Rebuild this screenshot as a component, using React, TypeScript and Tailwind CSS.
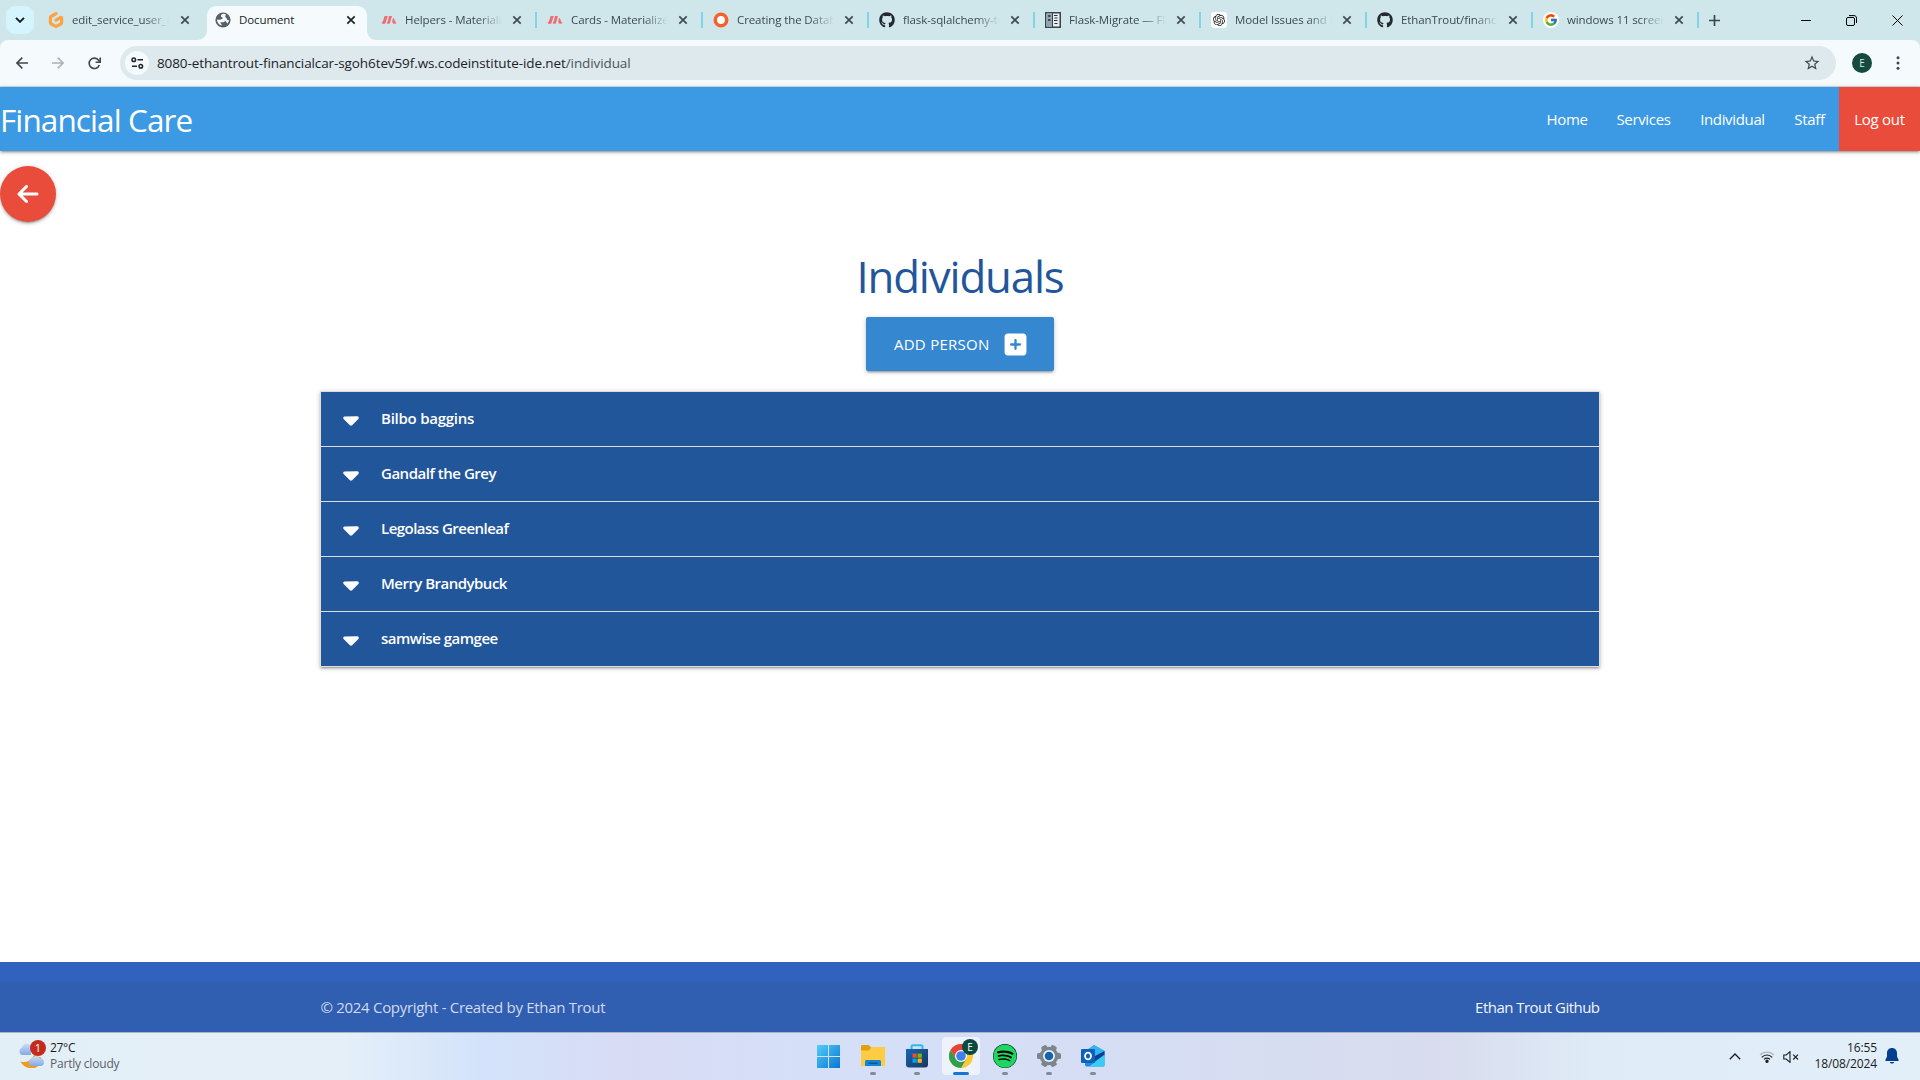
import React from "react";
import { FaArrowLeft, FaCaretDown, FaGithub, FaSpotify, FaSquarePlus } from "react-icons/fa6";
import { FcGoogle } from "react-icons/fc";
import { SiGitpod, SiOpenai } from "react-icons/si";
import { MdStarBorder } from "react-icons/md";

function Globe() {
  return (
    <svg viewBox="0 0 16 16" className="size-4">
      <circle cx="8" cy="8" r="7.6" fill="#5a5f64" />
      <path d="M8.2 1.8C6.2 2 5.2 3.6 6.2 4.8c.6.7 1.6.5 1.5 1.5-.1.8-1.4.6-2.2 1.3-.5.4-1.8.3-3.6-.1.1 3 1.9 5.3 4.6 6V12c-.9-.3-1.2-1-.9-1.7h2.6c1.200 0 1.300-1.100 2.400-1.200l1.700 2.300c1-.9 1.700-2.100 1.800-3.400-1.200.6-2.300-.2-2.300-1.200 0-1.300-1.500-.9-1.600-2.200 0-.9.700-1.300.700-2-.8-.5-1.600-.8-2.700-.8z" fill="#f5fafc" />
    </svg>
  );
}

function Materialize() {
  return (
    <svg viewBox="0 0 16 16" className="size-4" fill="#ee6e73">
      <path d="M3.600 4h3.200L4.300 11.500C3.400 12.400 1.600 12 .4 10.800 2 10.500 2.600 7 3.600 4z" />
      <path d="M8 4h3l-2 7c-.9 1.300-2.600 1-3.300 0C7 9.500 7.400 6.500 8 4z" />
      <path d="M12 6c1.500-.5 1.600 4 3.600 4.800-.8 1.200-3.600 1.500-4.200-.4-.2-1.400.2-3 .6-4.400z" />
    </svg>
  );
}

function Book() {
  return (
    <svg viewBox="0 0 16 16" className="size-4">
      <rect x=".75" y=".75" width="14.500" height="14.500" fill="#e9eef1" stroke="#3b444b" strokeWidth="1.500" />
      <path d="M1.500 1.500H7v13H1.500z" fill="#91a5b0" />
      <path d="M7.500 0v16" stroke="#3b444b" />
      <path d="M3 4h2.500M3 8h2.500" stroke="#27313a" strokeWidth="1.500" />
      <path d="M9 3.500h3.500M9.500 6h3M9 8.500h3.500M9.500 11.500h3" stroke="#27313a" strokeWidth="1.200" />
    </svg>
  );
}

function Close({ dark }: { dark?: boolean }) {
  return (
    <svg viewBox="0 0 10 10" className="size-[10px]" stroke={dark ? "#1d2426" : "#3e4b50"} strokeWidth="1.700">
      <path d="M1.300 1.300l7.400 7.400M8.700 1.300L1.300 8.700" />
    </svg>
  );
}

const tabs: { title: string; icon: React.ReactNode; sep?: boolean }[] = [
  { title: "edit_service_user_b", icon: <SiGitpod className="size-4 text-[#ffa13d]" /> },
  { title: "Document", icon: <Globe /> },
  { title: "Helpers - Materialize", icon: <Materialize /> },
  { title: "Cards - Materialize", icon: <Materialize />, sep: true },
  {
    title: "Creating the Databa",
    icon: (
      <svg viewBox="0 0 16 16" className="size-4">
        <circle cx="8" cy="8" r="5.700" fill="#fff" stroke="#f9602a" strokeWidth="3.500" />
      </svg>
    ),
    sep: true,
  },
  { title: "flask-sqlalchemy-tu", icon: <FaGithub className="size-4 text-[#24292f]" />, sep: true },
  { title: "Flask-Migrate — Fla", icon: <Book />, sep: true },
  {
    title: "Model Issues and F",
    icon: (
      <span className="flex size-4 items-center justify-center rounded-[3px] bg-white">
        <SiOpenai className="size-3 text-[#222]" />
      </span>
    ),
    sep: true,
  },
  { title: "EthanTrout/financia", icon: <FaGithub className="size-4 text-[#24292f]" />, sep: true },
  {
    title: "windows 11 screens",
    icon: (
      <span className="flex size-4 items-center justify-center rounded-full bg-white">
        <FcGoogle className="size-[14px]" />
      </span>
    ),
    sep: true,
  },
];

function TabStrip() {
  return (
    <div className="flex h-10 bg-[#cfe6eb]">
      <div className="mt-1.5 ml-1.5 flex h-7 w-7 shrink-0 items-center justify-center rounded-[9px] bg-[#d4f5fe]">
        <svg viewBox="0 0 10 6" className="h-[6px] w-[10px]" fill="none" stroke="#15191b" strokeWidth="1.900">
          <path d="M1 .8l4 4 4-4" />
        </svg>
      </div>
      <div className="ml-1 flex">
        {tabs.map((t, i) => {
          const active = i === 1;
          return (
            <div key={t.title} className="relative flex h-10 w-[166px] items-center">
              {active && (
                <svg viewBox="0 0 180 34" className="absolute top-1.5 left-[-7px] h-[34px] w-[180px]" fill="#f5fafd">
                  <path d="M0 34c6 0 10-4 10-10V10C10 4 14 0 20 0h140c6 0 10 4 10 10v14c0 6 4 10 10 10z" />
                </svg>
              )}
              {t.sep && <span className="absolute top-3 left-[-1px] h-4 w-0.5 bg-[#84d2e6]" />}
              <span className={`relative flex size-4 items-center justify-center ${i === 0 ? "ml-2.5" : "ml-[11px]"}`}>{t.icon}</span>
              <span
                className={`relative ml-2 w-[97px] overflow-hidden text-[11.5px] leading-4 tracking-[-0.1px] whitespace-nowrap ${active ? "text-[#1c2326]" : "mask-r-from-75% text-[#3a4a50]"}`}
              >
                {t.title}
              </span>
              <span className={`relative ${i === 0 ? "ml-[11px]" : "ml-[10px]"}`}>
                <Close dark={active} />
              </span>
            </div>
          );
        })}
      </div>
      <div className="relative flex items-center pl-[11px]">
        <span className="absolute top-3 left-[-1px] h-4 w-0.5 bg-[#84d2e6]" />
        <svg viewBox="0 0 11 11" className="size-[11px]" stroke="#37474c" strokeWidth="1.700">
          <path d="M5.500 0v11M0 5.500h11" />
        </svg>
      </div>
      <div className="mr-[17px] ml-auto flex items-center gap-[35px]">
        <svg viewBox="0 0 10 10" className="size-[10px]" stroke="#000" strokeWidth="1">
          <path d="M0 5.500h10" />
        </svg>
        <svg viewBox="0 0 11 11" className="size-[11px]" fill="none" stroke="#000">
          <rect x=".5" y="2.500" width="8" height="8" rx="1.500" />
          <path d="M3 .6h5c1.500 0 2.500 1 2.500 2.500V8" />
        </svg>
        <svg viewBox="0 0 11 11" className="size-[11px]" stroke="#000" strokeWidth="1">
          <path d="M.5.5l10 10M10.500.5L.5 10.500" />
        </svg>
      </div>
    </div>
  );
}

function AddressBar() {
  return (
    <div className="bg-[#cfe6eb]">
      <div className="flex h-[47px] items-center rounded-t-[8px] border-b border-[#d3dadd] bg-[#f5fafd] pl-4">
        <svg viewBox="0 0 12 12" className="size-3" fill="none" stroke="#3c4a4e" strokeWidth="1.600">
          <path d="M12 6H1M6.300.6L.9 6l5.400 5.400" />
        </svg>
        <svg viewBox="0 0 12 12" className="ml-6 size-3" fill="none" stroke="#aab3b6" strokeWidth="1.600">
          <path d="M0 6h11M5.700.6L11.100 6l-5.400 5.400" />
        </svg>
        <svg viewBox="0 0 13 13" className="ml-6 size-[13px]" fill="none" stroke="#3c4a4e" strokeWidth="1.600">
          <path d="M11.300 8A5.200 5.200 0 1 1 10.600 3.300l1.300 1.400" />
          <path d="M12.200.5v4.700H7.600" />
        </svg>
        <div className="ml-[19px] flex h-[34px] w-[1716px] items-center rounded-full bg-[#dde9ed] pl-[5px]">
          <span className="flex size-6 items-center justify-center rounded-full bg-[#f5fafd]">
            <svg viewBox="0 0 13 12" className="h-3 w-[13px]" fill="none" stroke="#1e2629" strokeWidth="1.500">
              <circle cx="2.800" cy="2.800" r="1.800" />
              <path d="M6.500 2.800H12M1 9.200h5" />
              <circle cx="9.800" cy="9.200" r="1.800" />
            </svg>
          </span>
          <span className="ml-2 text-[13.5px] tracking-[-0.1px] whitespace-nowrap text-[#1c2326]">
            8080-ethantrout-financialcar-sgoh6tev59f.ws.codeinstitute-ide.net<span className="text-[#4a555a]">/individual</span>
          </span>
          <MdStarBorder className="mr-[15px] ml-auto size-[18px] text-[#3c4a4e]" />
        </div>
        <span className="ml-4 flex size-5 items-center justify-center rounded-full bg-[#154a3f] text-[10px] text-[#d8e8e2]">E</span>
        <svg viewBox="0 0 4 14" className="ml-6 h-[14px] w-1" fill="#3c4a4e">
          <circle cx="2" cy="1.800" r="1.500" />
          <circle cx="2" cy="7" r="1.500" />
          <circle cx="2" cy="12.200" r="1.500" />
        </svg>
      </div>
    </div>
  );
}

const people = [
  { name: "Bilbo baggins", track: "tracking-[-0.25px]" },
  { name: "Gandalf the Grey", track: "tracking-[-0.48px]" },
  { name: "Legolass Greenleaf", track: "tracking-[-0.52px]" },
  { name: "Merry Brandybuck", track: "tracking-[-0.52px]" },
  { name: "samwise gamgee", track: "tracking-[-0.48px]" },
];

const materialShadow =
  "shadow-[0_2px_2px_0_rgba(0,0,0,0.14),0_3px_1px_-2px_rgba(0,0,0,0.12),0_1px_5px_0_rgba(0,0,0,0.2)]";

function Site() {
  return (
    <div className="flex h-[945px] flex-col bg-white">
      <nav className={`flex h-16 shrink-0 items-center bg-[#3c99e4] text-white ${materialShadow}`}>
        <span className="pt-0.5 text-[31.5px] leading-none tracking-[-0.9px] whitespace-nowrap">Financial Care</span>
        <ul className="ml-auto flex text-[15px] leading-[64px] whitespace-nowrap">
          <li className="w-[70px] text-center tracking-[-0.35px]">Home</li>
          <li className="w-[83px] text-center tracking-[-0.35px]">Services</li>
          <li className="w-[95px] text-center tracking-[-0.35px]">Individual</li>
          <li className="w-[59px] text-center tracking-[-0.3px]">Staff</li>
          <li className="w-[81px] bg-[#e94c3b] text-center tracking-[-0.3px]">Log out</li>
        </ul>
      </nav>
      <div className={`mt-[15px] flex size-14 shrink-0 items-center justify-center rounded-full bg-[#e94c3b] ${materialShadow}`}>
        <FaArrowLeft className="size-6 text-white" />
      </div>
      <main className="mx-auto flex w-[1280px] flex-col items-center">
        <h3 className="mt-[29px] text-[43.8px] leading-[50px] tracking-[-1.15px] text-[#22569b]">Individuals</h3>
        <button className={`mt-4 flex h-[54px] w-[188px] items-center rounded-xs bg-[#3587cf] pl-7 text-[15px] text-white ${materialShadow}`}>
          <span className="tracking-[0.25px] whitespace-nowrap">ADD PERSON</span>
          <FaSquarePlus className="mr-[26px] ml-auto size-[25px] shrink-0" />
        </button>
        <ul className={`mt-5 w-full border border-b-0 border-[#ddd] ${materialShadow}`}>
          {people.map((p) => (
            <li key={p.name} className="flex h-[55px] items-center border-b border-[#ddd] bg-[#22569b] pl-[22px] text-[15px] font-semibold text-white">
              <FaCaretDown className="size-[25px] w-4 shrink-0" />
              <span className={`ml-[22px] pb-0.5 whitespace-nowrap ${p.track}`}>{p.name}</span>
            </li>
          ))}
        </ul>
      </main>
      <footer className="mt-auto bg-[#3162bd] pt-5">
        <div className="bg-[#305eb1]">
          <div className="mx-auto flex h-[50px] w-[1279px] items-center justify-between text-[15px]">
            <span className="tracking-[-0.3px] text-[#d1dbed]">© 2024 Copyright - Created by Ethan Trout</span>
            <span className="tracking-[-0.52px] text-[#f2f5fa]">Ethan Trout Github</span>
          </div>
        </div>
      </footer>
    </div>
  );
}

function TaskItem({ children, active, idle }: { children: React.ReactNode; active?: boolean; idle?: boolean }) {
  return (
    <div className={`relative flex h-[38px] w-[38px] items-center justify-center rounded ${idle ? "mr-px" : ""} ${active ? "bg-[#eef3fb]" : ""}`}>
      {children}
      {!idle && (
        <span className={`absolute bottom-0 h-[3px] rounded-full ${active ? "w-4 bg-[#1677d2]" : "w-1.5 bg-[#858b95]"}`} />
      )}
    </div>
  );
}

function Taskbar() {
  return (
    <div className="grid h-12 w-full grid-cols-[1fr_auto_1fr] border-t border-[#a9b3c4] bg-[linear-gradient(90deg,#e3eff7_0%,#e4eff8_18%,#d3e3fb_25%,#d8dbf4_33%,#d5e0f8_42%,#d5def5_55%,#d8dcee_75%,#dfebf7_83%,#e2eef8_100%)]">
      <div className="flex items-center pb-px pl-[18px] text-[12px]">
        <div className="relative mt-[-4px] size-[28px]">
          <svg viewBox="0 0 28 28" className="size-7">
            <defs>
              <linearGradient id="cloud" x1="0" y1="0" x2="0" y2="1">
                <stop offset="0" stopColor="#c7dcfb" />
                <stop offset="1" stopColor="#86a9e4" />
              </linearGradient>
            </defs>
            <path d="M4 15a4 4 0 0 1 0-7.500 5 5 0 0 1 9-1.500V15z" fill="url(#cloud)" />
            <path d="M16 15a11 11 0 0 1-13.500 6.500C5 27 12 30 18 27.500c4-2 6-6 5-10z" fill="#f09a22" />
            <path d="M13 26a3.500 3.500 0 0 1 0-6.500 5 5 0 0 1 9-1 3.800 3.800 0 0 1 1 7.500z" fill="url(#cloud)" />
          </svg>
          <span className="absolute top-0 right-0 flex size-4 items-center justify-center rounded-full bg-[#c42b1c] text-[11px] text-white">1</span>
        </div>
        <div className="ml-1 leading-4">
          <div className="tracking-[-0.3px] text-[#1b1b1b]">27°C</div>
          <div className="tracking-[-0.2px] text-[#5a6068]">Partly cloudy</div>
        </div>
      </div>
      <div className="flex items-center gap-1.5 pb-px pl-px">
        <TaskItem idle>
          <svg viewBox="0 0 23 23" className="size-[23px]">
            <defs>
              <linearGradient id="win" x1="0" y1="0" x2="1" y2="1">
                <stop offset="0" stopColor="#52cdf8" />
                <stop offset="1" stopColor="#0a75d0" />
              </linearGradient>
            </defs>
            <path d="M0 0h11v11H0zM12 0h11v11H12zM0 12h11v11H0zM12 12h11v11H12z" fill="url(#win)" />
          </svg>
        </TaskItem>
        <TaskItem>
          <svg viewBox="0 0 24 22" className="h-[22px] w-6">
            <path d="M0 1.500C0 .7.500 0 1.300 0h6.500L10 2.500h13c.6 0 1 .4 1 1V8H0z" fill="#e0a010" />
            <path d="M0 5.500h8L10.500 2H23c.6 0 1 .4 1 1v18H1c-.6 0-1-.4-1-1z" fill="#fdcc43" />
            <path d="M4 21v-4.500C4 15.600 4.700 15 5.500 15h13c.9 0 1.500.600 1.500 1.500V21z" fill="#1583d3" />
            <path d="M8 18.300h8" stroke="#0b569b" strokeWidth="1.500" strokeLinecap="round" />
          </svg>
        </TaskItem>
        <TaskItem>
          <svg viewBox="0 0 24 24" className="size-6">
            <defs>
              <linearGradient id="store" x1="0" y1="0" x2="1" y2="1">
                <stop offset="0" stopColor="#1467b6" />
                <stop offset="1" stopColor="#1c355e" />
              </linearGradient>
            </defs>
            <path d="M6.500 7V3c0-1 .5-1.700 1.500-1.700h8c1 0 1.500.700 1.500 1.700v4" fill="none" stroke="#32b8ef" strokeWidth="2" />
            <path d="M1 5h22v15.500c0 2-1 3-3 3H4c-2 0-3-1-3-3z" fill="url(#store)" />
            <path d="M7.500 9.500h4.200v4.200H7.500z" fill="#f25022" />
            <path d="M12.600 9.500h4.200v4.200h-4.200z" fill="#7fba00" />
            <path d="M7.500 14.600h4.200v4.200H7.500z" fill="#00a4ef" />
            <path d="M12.600 14.600h4.200v4.200h-4.200z" fill="#ffb900" />
          </svg>
        </TaskItem>
        <TaskItem active>
          <svg viewBox="0 0 24 24" className="size-6">
            <circle cx="12" cy="12" r="12" fill="#fcc934" />
            <path d="M12 6h10.400A12 12 0 0 0 1.600 6l5.200 9z" fill="#ea4335" />
            <path d="M1.600 6a12 12 0 0 0 10.400 18l5.200-9H6.800z" fill="#2da04e" />
            <circle cx="12" cy="12" r="6" fill="#fff" />
            <circle cx="12" cy="12" r="4.800" fill="#3f7fee" />
          </svg>
          <span className="absolute top-0.5 right-0.5 flex size-4 items-center justify-center rounded-full bg-[#0a4a40] text-[10px] text-white">E</span>
        </TaskItem>
        <TaskItem>
          <span className="flex size-6 items-center justify-center rounded-full bg-black">
            <FaSpotify className="size-6 text-[#1ed760]" />
          </span>
        </TaskItem>
        <TaskItem>
          <svg viewBox="0 0 24 24" className="size-6">
            <g fill="#7d848b">
              <circle cx="12" cy="12" r="9.300" />
              <rect x="9" y="0.500" width="6" height="23" rx="1.500" transform="rotate(30 12 12)" />
              <rect x="9" y="0" width="6" height="24" rx="1.500" transform="rotate(90 12 12)" />
              <rect x="9" y="0.500" width="6" height="23" rx="1.500" transform="rotate(150 12 12)" />
            </g>
            <circle cx="12" cy="12" r="6" fill="#eef2f6" />
            <circle cx="12" cy="12" r="4.300" fill="#1263b4" />
          </svg>
        </TaskItem>
        <TaskItem>
          <svg viewBox="0 0 24 24" className="size-6">
            <path d="M4 7.500L13 1l10.500 6v14c0 1-.7 1.500-1.500 1.500H6c-1 0-2-.7-2-1.500z" fill="#1a8be0" />
            <path d="M13 1l10.500 6L14 14 5 8z" fill="#35b5ee" />
            <path d="M14 12l9.500-5v4.500L14 17z" fill="#0a3f94" />
            <path d="M23.500 10.500V21c0 1-.7 1.500-1.500 1.500H8z" fill="#3ccbf4" />
            <rect x="0" y="5" width="14" height="14" rx="1.200" fill="#0f5fbd" />
            <ellipse cx="7" cy="12" rx="3" ry="3.400" fill="none" stroke="#fff" strokeWidth="1.800" />
          </svg>
        </TaskItem>
      </div>
      <div className="flex items-center justify-end pr-[21px]">
        <svg viewBox="0 0 12 7" className="h-[7px] w-3" fill="none" stroke="#1b1b1b" strokeWidth="1.300">
          <path d="M.8 6.200L6 1l5.200 5.200" />
        </svg>
        <svg viewBox="0 0 16 13" className="ml-[18px] h-[13px] w-4" fill="none" stroke="#1b1b1b" strokeWidth="1.200">
          <path d="M1 5.200a9.500 9.500 0 0 1 14 0" stroke="#b0b8c0" />
          <path d="M2.800 7.300a7 7 0 0 1 10.400 0M5 9.300a4.200 4.200 0 0 1 6 0" />
          <circle cx="8" cy="11.200" r="1.100" fill="#1b1b1b" />
        </svg>
        <svg viewBox="0 0 16 12" className="ml-2 h-3 w-4" fill="none" stroke="#1b1b1b" strokeWidth="1.100">
          <path d="M.8 4v4h2.400L7 11.300V.7L3.200 4z" />
          <path d="M10.200 3.700l4.800 4.800M15 3.700l-4.800 4.800" />
        </svg>
        <div className="ml-4 pb-px text-right text-[12px] leading-4 tracking-[-0.12px] text-[#1b1b1b]">
          <div>16:55</div>
          <div>18/08/2024</div>
        </div>
        <svg viewBox="0 0 14 16" className="mb-px ml-2 h-4 w-[14px]" fill="#053e90">
          <path d="M7 0C3.900 0 2 2.200 2 5v3.500L.4 12c-.2.600.1 1 .7 1h11.800c.6 0 .9-.4.700-1L12 8.500V5c0-2.800-1.900-5-5-5zM4.800 14h4.400c-.3 1-1.200 1.500-2.200 1.500S5.100 15 4.800 14z" />
        </svg>
      </div>
    </div>
  );
}

export default function App() {
  return (
    <div className="h-[1080px] w-[1920px] overflow-hidden font-['Open_Sans','Noto_Sans',sans-serif]">
      <TabStrip />
      <AddressBar />
      <Site />
      <Taskbar />
    </div>
  );
}
